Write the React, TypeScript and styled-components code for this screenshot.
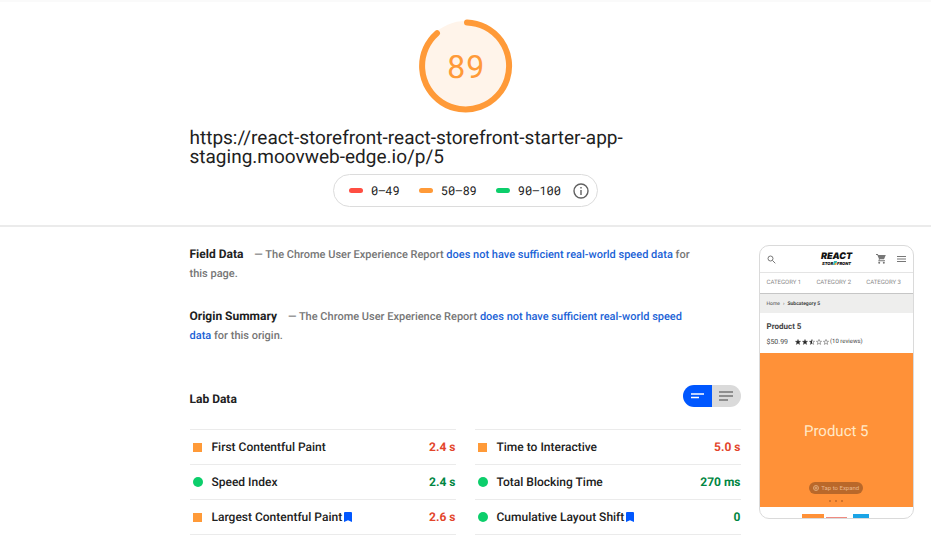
import React, { useState } from "react";
import styled, { createGlobalStyle } from "styled-components";

const GlobalStyle = createGlobalStyle`
  * { box-sizing: border-box; }
  body {
    margin: 0;
    background: #fff;
    color: #212121;
    font-family: Roboto, "Liberation Sans", sans-serif;
    text-rendering: geometricPrecision;
    overflow: hidden;
  }
  h1, h2, p, dl, dd, dt, ul { margin: 0; padding: 0; }
`;

type Rating = "poor" | "average" | "good";
const ratingFill: Record<Rating, string> = {
  poor: "#ff4e42",
  average: "#ff9a38",
  good: "#0cce6b",
};

const Columns = styled.div`
  display: grid;
  grid-template-columns: minmax(0, 1fr) minmax(0, 552px) minmax(0, 1fr);
`;

const Header = styled.header`
  border-top: 2px solid #fafafa;
  border-bottom: 2px solid #ebebeb;
  padding-bottom: 18px;
`;

const HeaderBody = styled.div`
  grid-column: 2;
  display: flex;
  flex-direction: column;
  align-items: center;
`;

const Gauge = styled.div`
  display: grid;
  width: 94px;
  height: 94px;
  margin-top: 17px;
  place-items: center;

  & > * {
    grid-area: 1 / 1;
  }
`;

const Score = styled.span`
  font: 400 32px/38px "Roboto Mono", Roboto, sans-serif;
  color: #ff9a38;
`;

const PageUrl = styled.h1`
  align-self: stretch;
  margin-top: 15px;
  font-size: 19px;
  line-height: 19px;
  font-weight: 400;
`;

const Legend = styled.ul`
  display: flex;
  align-items: center;
  gap: 19px;
  height: 33px;
  margin-top: 8px;
  padding: 0 8px 0 15px;
  border: 1px solid #dcdcdc;
  border-radius: 17px;
  list-style: none;
  font: 400 12px/16px "Roboto Mono", "DejaVu Sans Mono", monospace;
`;

const LegendItem = styled.li<{ $rating: Rating }>`
  display: flex;
  align-items: center;
  gap: 8px;

  &::before {
    content: "";
    width: 14px;
    height: 5px;
    border-radius: 3px;
    background: ${(p) => ratingFill[p.$rating]};
  }
`;

const InfoItem = styled.li`
  display: flex;
  margin-left: -7px;
`;

const IconButton = styled.button`
  display: flex;
  padding: 0;
  border: 0;
  background: none;
  color: #616161;
`;

const Report = styled.main`
  grid-column: 2;
  padding: 18px 1px 0 0;
`;

const Summary = styled.section`
  padding-right: 48px;
  margin-bottom: 24px;
  font-size: 11px;
  line-height: 19px;
  font-weight: 500;
  color: #757575;
`;

const SectionTitle = styled.h2`
  display: inline;
  margin-right: 11px;
  font-size: 12px;
  line-height: 19px;
  font-weight: 700;
  color: #212121;
`;

const Note = styled.p`
  display: inline;
`;

const Link = styled.a`
  color: #1a62d6;
  text-decoration: none;
`;

const LabHeader = styled.div`
  display: flex;
  align-items: flex-start;
  justify-content: space-between;
  margin-top: 40px;
  margin-bottom: 20px;

  h2 {
    margin-top: 5px;
  }
`;

const Toggle = styled.div`
  display: flex;
  height: 22px;
  border-radius: 11px;
  overflow: hidden;
`;

const ToggleButton = styled.button<{ $on: boolean }>`
  display: flex;
  align-items: center;
  justify-content: center;
  width: 29px;
  padding: 0;
  border: 0;
  background: ${(p) => (p.$on ? "#0057ff" : "#dadada")};
  color: ${(p) => (p.$on ? "#fff" : "#757575")};
`;

const Metrics = styled.dl`
  display: grid;
  grid-template-columns: 1fr 1fr;
  column-gap: 19px;
`;

const Metric = styled.div`
  display: flex;
  align-items: center;
  height: 35px;
  border-top: 1px solid #ebebeb;
  font-size: 12px;
  line-height: 18px;
  font-weight: 500;

  &:nth-last-child(-n + 2) {
    height: 36px;
    border-bottom: 1px solid #ebebeb;
  }
`;

const Marker = styled.span<{ $rating: Rating }>`
  width: ${(p) => (p.$rating === "good" ? 10 : 9)}px;
  height: ${(p) => (p.$rating === "good" ? 10 : 9)}px;
  margin: 0 ${(p) => (p.$rating === "good" ? 9 : 10)}px 0 3px;
  border-radius: ${(p) => (p.$rating === "good" ? "50%" : "0")};
  background: ${(p) => ratingFill[p.$rating]};
`;

const MetricName = styled.dt`
  display: flex;
  align-items: center;
  gap: 2px;
  flex: 1;
`;

const MetricValue = styled.dd<{ $ok: boolean }>`
  font-weight: 700;
  color: ${(p) => (p.$ok ? "#018642" : "#e3452b")};
`;

const Aside = styled.aside`
  padding: 18px 17px 0;
`;

const Phone = styled.div`
  height: 274px;
  border: 1px solid #dadada;
  border-radius: 10px;
  overflow: hidden;
  font-size: 6px;
  line-height: 8px;
  color: #444;
`;

const ShopBar = styled.div`
  display: flex;
  align-items: center;
  height: 27px;
  padding: 0 7px;
  border-bottom: 1px solid #e4e4e4;
  color: #777;
`;

const ShopLogo = styled.div`
  display: flex;
  flex-direction: column;
  align-items: center;
  width: 38px;
  margin-left: 42px;
  margin-right: auto;
  font-family: Inter, sans-serif;
  font-style: italic;
  font-weight: 900;
  color: #111;
`;

const LogoTop = styled.span`
  font-size: 9px;
  line-height: 8px;
`;

const LogoBottom = styled.span`
  display: flex;
  align-items: center;
  font-size: 4px;
  line-height: 5px;
`;

const ShopIcons = styled.div`
  display: flex;
  align-items: center;
  gap: 11px;
`;

const Categories = styled.div`
  display: flex;
  justify-content: space-between;
  align-items: center;
  height: 20px;
  padding: 0 12px 0 7px;
  color: #8a8a8a;
`;

const Crumbs = styled.div`
  display: flex;
  align-items: center;
  gap: 3px;
  height: 20px;
  padding: 0 7px;
  border-top: 1px solid #c6c6c6;
  background: #eeeeed;
  font-size: 5px;
`;

const Product = styled.div`
  display: flex;
  flex-direction: column;
  gap: 6px;
  height: 40px;
  padding: 9px 7px 0;
`;

const ProductName = styled.strong`
  font-size: 8px;
  line-height: 10px;
  font-weight: 700;
`;

const PriceRow = styled.div`
  display: flex;
  align-items: center;
  gap: 7px;
`;

const Price = styled.span`
  font-size: 7px;
`;

const Reviews = styled.span`
  display: flex;
  align-items: center;
  gap: 1px;
`;

const ProductImage = styled.div`
  display: flex;
  flex-direction: column;
  align-items: center;
  height: 154px;
  padding-top: 68px;
  background: #ff9138;
  color: #ffe9c8;
`;

const ProductCaption = styled.span`
  font-size: 15px;
  line-height: 20px;
`;

const Expand = styled.button`
  display: flex;
  align-items: center;
  gap: 2px;
  height: 12px;
  margin-top: 41px;
  padding: 0 4px;
  border: 0;
  border-radius: 6px;
  background: #b9682a;
  color: #e9b78a;
  font: 400 6px/8px Roboto, sans-serif;
`;

const Dots = styled.div`
  display: flex;
  gap: 4px;
  margin-top: 6px;

  i {
    width: 2px;
    height: 2px;
    border-radius: 1px;
    background: #c06a28;
  }
`;

const Swatches = styled.div`
  display: flex;
  align-items: flex-end;
  gap: 2px;
  height: 11px;
  padding-left: 42px;
`;

const Swatch = styled.span<{ $w: number; $h: number; $c: string }>`
  width: ${(p) => p.$w}px;
  height: ${(p) => p.$h}px;
  background: ${(p) => p.$c};

  &:last-child {
    margin-left: 4px;
  }
`;

const Bookmark = () => (
  <svg width="8" height="10" viewBox="0 0 8 10" aria-label="Core Web Vital">
    <path d="M0 1a1 1 0 0 1 1-1h6a1 1 0 0 1 1 1v9L4 8.2 0 10z" fill="#0057ff" />
  </svg>
);

const starPath = "M3 0l.8 2.1 2.2.1-1.7 1.4.6 2.2L3 4.6 1.1 5.8l.6-2.2L0 2.2l2.2-.1z";
const Star = ({ fill }: { fill: "full" | "half" | "none" }) => (
  <svg width="6" height="6" viewBox="-0.5 -0.5 7 7">
    <path d={starPath} fill={fill === "full" ? "#222" : "none"} stroke="#333" strokeWidth=".5" />
    {fill === "half" && <path d="M3 0v4.6L1.1 5.8l.6-2.2L0 2.2l2.2-.1z" fill="#222" />}
  </svg>
);

const metrics: { name: string; value: string; rating: Rating; vital?: boolean }[] = [
  { name: "First Contentful Paint", value: "2.4 s", rating: "average" },
  { name: "Time to Interactive", value: "5.0 s", rating: "average" },
  { name: "Speed Index", value: "2.4 s", rating: "good" },
  { name: "Total Blocking Time", value: "270 ms", rating: "good" },
  { name: "Largest Contentful Paint", value: "2.6 s", rating: "average", vital: true },
  { name: "Cumulative Layout Shift", value: "0", rating: "good", vital: true },
];

export default function App() {
  const [expanded, setExpanded] = useState(false);

  return (
    <>
      <GlobalStyle />
      <Header>
        <Columns>
          <HeaderBody>
            <Gauge>
              <svg width="94" height="94" viewBox="0 0 94 94">
                <circle cx="46.5" cy="47" r="45" fill="#fff4ea" />
                <path
                  d="M48 3.5A43.5 43.5 0 1 1 18 14.2"
                  fill="none"
                  stroke="#ff9a38"
                  strokeWidth="6"
                  strokeLinecap="round"
                />
              </svg>
              <Score>89</Score>
            </Gauge>
            <PageUrl>https://react-storefront-react-storefront-starter-app-staging.moovweb-edge.io/p/5</PageUrl>
            <Legend>
              <LegendItem $rating="poor">0–49</LegendItem>
              <LegendItem $rating="average">50–89</LegendItem>
              <LegendItem $rating="good">90–100</LegendItem>
              <InfoItem>
                <IconButton aria-label="About the score">
                  <svg width="16" height="16" viewBox="0 0 16 16" fill="none" stroke="currentColor">
                    <circle cx="8" cy="8" r="7" strokeWidth="1.4" />
                    <path d="M8 7v5M8 4v1.6" strokeWidth="1.4" />
                  </svg>
                </IconButton>
              </InfoItem>
            </Legend>
          </HeaderBody>
        </Columns>
      </Header>

      <Columns>
        <Report>
          <Summary>
            <SectionTitle>Field Data</SectionTitle>
            <Note>
              — The Chrome User Experience Report{" "}
              <Link href="#field">does not have sufficient real-world speed data</Link> for this page.
            </Note>
          </Summary>
          <Summary>
            <SectionTitle>Origin Summary</SectionTitle>
            <Note>
              — The Chrome User Experience Report{" "}
              <Link href="#origin">does not have sufficient real-world speed data</Link> for this origin.
            </Note>
          </Summary>
          <LabHeader>
            <SectionTitle>Lab Data</SectionTitle>
            <Toggle>
              <ToggleButton $on={!expanded} aria-label="Compact view" aria-pressed={!expanded} onClick={() => setExpanded(false)}>
                <svg width="13" height="6" viewBox="0 0 13 6" stroke="currentColor" strokeWidth="1.5">
                  <path d="M0 1h13M0 4.5h8" />
                </svg>
              </ToggleButton>
              <ToggleButton $on={expanded} aria-label="Expanded view" aria-pressed={expanded} onClick={() => setExpanded(true)}>
                <svg width="14" height="10" viewBox="0 0 14 10" stroke="currentColor" strokeWidth="1.5">
                  <path d="M0 1h14M0 5h14M0 9h9" />
                </svg>
              </ToggleButton>
            </Toggle>
          </LabHeader>
          <Metrics>
            {metrics.map((m) => (
              <Metric key={m.name}>
                <Marker $rating={m.rating} />
                <MetricName>
                  {m.name}
                  {m.vital && <Bookmark />}
                </MetricName>
                <MetricValue $ok={m.rating === "good"}>{m.value}</MetricValue>
              </Metric>
            ))}
          </Metrics>
        </Report>

        <Aside>
          <Phone>
            <ShopBar>
              <svg width="9" height="9" viewBox="0 0 9 9" fill="none" stroke="currentColor">
                <circle cx="3.5" cy="3.5" r="2.5" />
                <path d="M5.4 5.4L8.3 8.3" />
              </svg>
              <ShopLogo>
                <LogoTop>REACT</LogoTop>
                <LogoBottom>
                  STOR
                  <svg width="4" height="4" viewBox="0 0 4 4">
                    <path d="M1 0h3L3 4H0z" fill="#35b8b2" />
                    <path d="M2 2h1.5L3 4H1.5z" fill="#efa63a" />
                  </svg>
                  FRONT
                </LogoBottom>
              </ShopLogo>
              <ShopIcons>
                <svg width="10" height="10" viewBox="0 0 10 10" fill="currentColor">
                  <path d="M0 0h1.8l.5 1h7.5L8 5.2H3.8l-.5 1.1H9v1H2.2L3 5 1.3 1H0z" />
                  <circle cx="3.2" cy="8.8" r="1" />
                  <circle cx="7.8" cy="8.8" r="1" />
                </svg>
                <svg width="9" height="8" viewBox="0 0 9 8" stroke="currentColor">
                  <path d="M0 1.5h9M0 4h9M0 6.5h9" />
                </svg>
              </ShopIcons>
            </ShopBar>
            <Categories>
              <span>CATEGORY 1</span>
              <span>CATEGORY 2</span>
              <span>CATEGORY 3</span>
            </Categories>
            <Crumbs>
              <span>Home</span>
              <span>›</span>
              <b>Subcategory 5</b>
            </Crumbs>
            <Product>
              <ProductName>Product 5</ProductName>
              <PriceRow>
                <Price>$50.99</Price>
                <Reviews>
                  <Star fill="full" />
                  <Star fill="full" />
                  <Star fill="half" />
                  <Star fill="none" />
                  <Star fill="none" />
                  <span>(10 reviews)</span>
                </Reviews>
              </PriceRow>
            </Product>
            <ProductImage>
              <ProductCaption>Product 5</ProductCaption>
              <Expand>
                <svg width="6" height="6" viewBox="0 0 6 6" fill="none" stroke="currentColor" strokeWidth=".8">
                  <circle cx="3" cy="3" r="2.5" />
                  <path d="M3 1.5v3M1.5 3h3" />
                </svg>
                Tap to Expand
              </Expand>
              <Dots>
                <i />
                <i />
                <i />
              </Dots>
            </ProductImage>
            <Swatches>
              <Swatch $w={22} $h={4} $c="#ff9138" />
              <Swatch $w={21} $h={1} $c="#ef8a80" />
              <Swatch $w={16} $h={4} $c="#1ba4e6" />
            </Swatches>
          </Phone>
        </Aside>
      </Columns>
    </>
  );
}
